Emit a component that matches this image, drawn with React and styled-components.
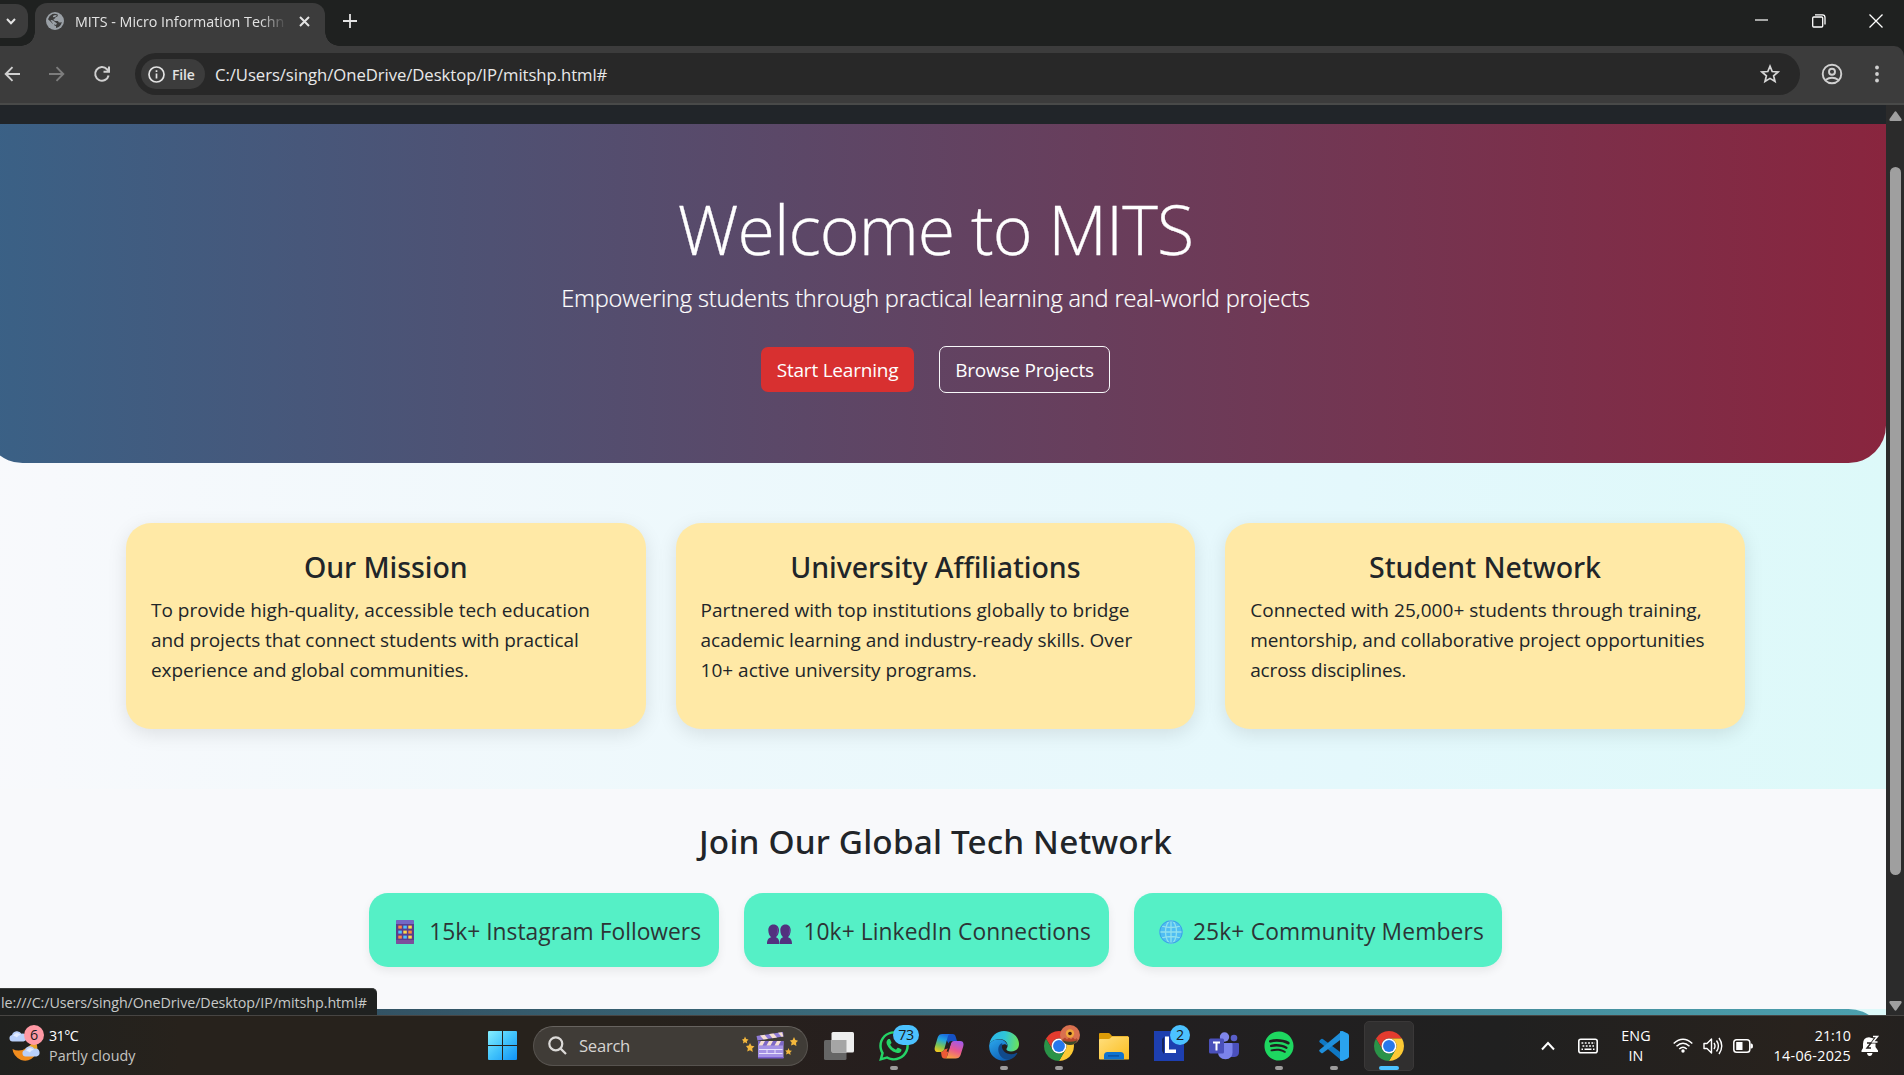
import React from "react";
import styled, { createGlobalStyle } from "styled-components";
import { FaSpotify, FaWhatsapp } from "react-icons/fa";

const Global = createGlobalStyle`
  *, *::before, *::after { box-sizing: border-box; }
  html, body { margin: 0; padding: 0; background: #1f2120; overflow: hidden; }
  body { font-family: "Open Sans", "Noto Sans", sans-serif; color: #212529; }
  h1, h2, h3, p { margin: 0; }
  svg { display: block; flex: none; }
`;

const Desktop = styled.div`
  width: 1904px;
  height: 1075px;
  overflow: hidden;
  display: flex;
  flex-direction: column;
`;

const Label = styled.span`
  display: block;
  white-space: nowrap;
  letter-spacing: ${(p) => p.$track || 0}px;
`;

/* ---------- Browser chrome ---------- */

const TabStrip = styled.header`
  height: 46px;
  flex: none;
  display: flex;
  background: #1f2120;
`;
const TabSearch = styled.div`
  width: 28px;
  height: 34px;
  margin-top: 4px;
  border-radius: 0 12px 12px 0;
  background: #3c3c3c;
  display: flex;
  align-items: center;
  padding-left: 5px;
`;
const Tab = styled.div`
  position: relative;
  width: 290px;
  height: 43px;
  margin: 3px 0 0 7px;
  padding: 0 12px 7px 11px;
  border-radius: 12px 12px 0 0;
  background: #3c3c3c;
  display: flex;
  align-items: center;
  &::before, &::after {
    content: "";
    position: absolute;
    bottom: 0;
    width: 14px;
    height: 14px;
  }
  &::before { left: -14px; background: radial-gradient(circle at 0 0, transparent 13.5px, #3c3c3c 14px); }
  &::after { right: -14px; background: radial-gradient(circle at 100% 0, transparent 13.5px, #3c3c3c 14px); }
`;
const TabTitle = styled.div`
  width: 209px;
  margin-left: 11px;
  padding-top: 1px;
  overflow: hidden;
  font-size: 14.3px;
  line-height: 22px;
  color: #e3e3e3;
  mask-image: linear-gradient(to right, #000 185px, transparent 212px);
`;
const TabClose = styled.div`
  margin-left: auto;
  margin-right: 3px;
`;
const NewTab = styled.div`
  margin: 14px 0 0 18px;
`;
const WindowControls = styled.div`
  margin-left: auto;
  display: flex;
  align-items: center;
  gap: 43px;
  padding: 0 21px 5px 0;
`;
const Toolbar = styled.div`
  height: 59px;
  flex: none;
  display: flex;
  align-items: center;
  padding-bottom: 1px;
  background: #3c3c3c;
  border-bottom: 2px solid #494a49;
  border-top-right-radius: 10px;
`;
const NavButtons = styled.div`
  width: 135px;
  display: flex;
  align-items: center;
  gap: 27px;
  padding-left: 3px;
`;
const AddressBar = styled.div`
  width: 1665px;
  height: 42px;
  border-radius: 21px;
  background: #282828;
  display: flex;
  align-items: center;
  padding: 0 20px 0 6px;
`;
const FileChip = styled.div`
  width: 64px;
  height: 30px;
  border-radius: 15px;
  background: #3c3c3c;
  display: flex;
  align-items: center;
  gap: 7px;
  padding-left: 7px;
  font: 600 14px "Open Sans", sans-serif;
  color: #e3e3e3;
`;
const Url = styled.div`
  margin-left: 10px;
  padding-top: 1px;
  font-size: 16.7px;
  line-height: 26px;
  color: #e8e8e8;
`;
const BarEnd = styled.div`
  margin-left: auto;
`;
const ToolbarActions = styled.div`
  display: flex;
  align-items: center;
  gap: 29px;
  margin-left: 21px;
`;

/* ---------- Page ---------- */

const Viewport = styled.main`
  height: 910px;
  flex: none;
  display: flex;
  position: relative;
`;
const Page = styled.div`
  width: 1901px;
  height: 910px;
  margin-left: -15px;
  flex: none;
  overflow: hidden;
  background: linear-gradient(to right, #f8f9fc 0%, #e4f8fc 72%, #ddf9f9 100%);
`;
const NavBarEdge = styled.div`
  height: 19px;
  background: #212529;
`;
const Hero = styled.section`
  height: 339px;
  padding-top: 62.5px;
  border-radius: 0 0 37.5px 37.5px;
  background: linear-gradient(to right, #3a6186, #89253e);
  color: #fff;
  display: flex;
  flex-direction: column;
  align-items: center;
`;
const HeroTitle = styled.h1`
  font-size: 68px;
  font-weight: 300;
  line-height: 84px;
  letter-spacing: -0.95px;
  white-space: nowrap;
  -webkit-text-stroke: 0.3px #fff;
`;
const HeroLead = styled.p`
  margin-top: 9px;
  font-size: 23.6px;
  font-weight: 300;
  line-height: 37.5px;
  letter-spacing: -0.17px;
  white-space: nowrap;
  -webkit-text-stroke: 0.2px #fff;
`;
const HeroActions = styled.div`
  margin-top: 28.5px;
  display: flex;
  align-items: center;
  gap: 25px;
`;
const Button = styled.button`
  width: ${(p) => p.$width}px;
  height: ${(p) => (p.$outline ? "47px" : "45px")};
  padding: 2px 0 0;
  border: ${(p) => (p.$outline ? "1.25px solid #f8f9fa" : "0")};
  border-radius: 7px;
  background: ${(p) => (p.$outline ? "transparent" : "#d83030")};
  color: #fff;
  font: 400 19px/30px "Open Sans", sans-serif;
  letter-spacing: -0.22px;
`;
const Features = styled.section`
  height: 326px;
  padding: 60px 0 0 141px;
  display: grid;
  grid-template-columns: repeat(3, 519.6px);
  grid-template-rows: 206px;
  column-gap: 30px;
`;
const Card = styled.article`
  border-radius: 25px;
  padding: 26px 25px 25px;
  background: #ffe9a6;
  box-shadow: 0 5px 19px rgba(0, 0, 0, 0.1);
`;
const CardTitle = styled.h3`
  margin-bottom: 10px;
  font: 500 28.5px/36px "Noto Sans", sans-serif;
  letter-spacing: -0.04px;
  text-align: center;
`;
const CardText = styled.p`
  font-size: 19px;
  line-height: 30px;
`;
const Community = styled.section`
  height: 220px;
  padding-top: 31px;
  background: #f8f9fb;
  display: flex;
  flex-direction: column;
  align-items: center;
`;
const CommunityTitle = styled.h2`
  font: 500 33.3px/42px "Noto Sans", sans-serif;
  letter-spacing: 0.17px;
`;
const Pills = styled.div`
  margin-top: 31px;
  display: flex;
  gap: 25px;
`;
const Pill = styled.div`
  width: ${(p) => p.$width}px;
  height: 74px;
  border-radius: 19px;
  padding: 4px 18px 0 0;
  background: #55f0c6;
  box-shadow: 0 4px 10px rgba(0, 0, 0, 0.07);
  display: flex;
  align-items: center;
  justify-content: flex-end;
  gap: ${(p) => p.$gap}px;
  font-size: 22.8px;
  line-height: 36px;
  color: #2d3436;
`;
const FooterTop = styled.footer`
  height: 120px;
  border-radius: 37.5px 37.5px 0 0;
  background: linear-gradient(to right, #2c3e50, #4ca1af);
`;
const Scrollbar = styled.div`
  width: 18px;
  background: #2b2b2b;
  display: flex;
  flex-direction: column;
  align-items: center;
  padding: 6px 0 4px 1px;
`;
const Thumb = styled.div`
  width: 11px;
  height: 708px;
  margin: 46px 0 auto;
  border-radius: 6px;
  background: #9f9f9f;
`;
const StatusBubble = styled.div`
  position: absolute;
  left: 0;
  bottom: 0;
  width: 377px;
  height: 27px;
  padding: 1px 10px 0 0;
  border-top: 1px solid #3b3d3c;
  border-top-right-radius: 5px;
  background: #1f2120;
  display: flex;
  justify-content: flex-end;
  overflow: hidden;
  font-size: 14.3px;
  line-height: 25px;
  color: #c7c9c8;
`;

/* ---------- Taskbar ---------- */

const Taskbar = styled.footer`
  height: 60px;
  flex: none;
  display: flex;
  align-items: center;
  border-top: 1px solid #474543;
  background: linear-gradient(to right, #20211f 0, #27221c 180px, #27221c 640px, #261e1e 900px, #221f20 1150px, #202020 1500px, #28221d 1800px, #24211f 1904px);
  color: #fff;
`;
const Weather = styled.div`
  width: 483px;
  display: flex;
  align-items: center;
  gap: 5px;
  padding: 0 0 0 8px;
  font-size: 14.3px;
  line-height: 20px;
`;
const Muted = styled.div`
  color: #c5c4c2;
`;
const AppsRow = styled.div`
  display: flex;
  align-items: center;
`;
const StartSlot = styled.div`
  margin: 0 16px 0 5px;
`;
const TaskCell = styled.div`
  position: relative;
  width: 50px;
  height: 50px;
  margin-right: 5px;
  border-radius: 5px;
  border: 1px solid ${(p) => (p.$active ? "#3a3838" : "transparent")};
  background: ${(p) => (p.$active ? "#302f2f" : "transparent")};
  display: flex;
  align-items: center;
  justify-content: center;
`;
const Indicator = styled.i`
  position: absolute;
  bottom: 0;
  left: 50%;
  width: ${(p) => (p.$active ? 20 : 8)}px;
  height: 4px;
  border-radius: 2px;
  transform: translateX(-50%);
  background: ${(p) => (p.$active ? "#4cc2ff" : "#9d9b9b")};
`;
const Badge = styled.span`
  position: absolute;
  top: ${(p) => p.$top ?? 3}px;
  right: ${(p) => p.$right ?? 3}px;
  width: ${(p) => p.$width || 20}px;
  height: 20px;
  border-radius: 10px;
  background: ${(p) => p.$tone || "#4cc2ff"};
  color: #1a1a1a;
  font-size: 14.3px;
  line-height: 20px;
  letter-spacing: -0.4px;
  text-align: center;
`;
const SearchBox = styled.div`
  width: 275px;
  height: 40px;
  margin-right: 6px;
  border-radius: 20px;
  border: 1px solid #57534f;
  border-top-color: #67635f;
  background: #403c37;
  display: flex;
  align-items: center;
  padding: 0 9px 0 14px;
  font-size: 16.7px;
  line-height: 24px;
  color: #d6d4d2;
`;
const SearchLabel = styled.div`
  margin: 0 auto 0 12px;
  padding-top: 1px;
`;
const WeatherIcon = styled.div`
  position: relative;
  width: 36px;
  height: 38px;
`;
const Tray = styled.div`
  margin-left: auto;
  display: flex;
  align-items: center;
  padding-right: 24px;
  font-size: 14.3px;
  line-height: 20px;
`;
const KeyboardSlot = styled.div`
  margin-left: 23px;
`;
const Language = styled.div`
  width: 30px;
  margin: 0 22px 0 23px;
  padding-top: 1px;
  display: flex;
  flex-direction: column;
  align-items: center;
`;
const StatusIcons = styled.div`
  display: flex;
  align-items: center;
  gap: 10px;
`;
const Clock = styled.div`
  width: 98px;
  margin-right: 10px;
  display: flex;
  flex-direction: column;
  align-items: flex-end;
`;

/* ---------- Icons ---------- */

const Stroke = ({ w, h = w, c = "#e3e3e3", s = 2, children }) => (
  <svg width={w} height={h} viewBox={`0 0 ${w} ${h}`} fill="none" stroke={c} strokeWidth={s}>
    {children}
  </svg>
);

const SpotifyMark = styled(FaSpotify)`
  color: #1ed760;
`;

const chromeSector = "M24 13H43.05A22 22 0 0 0 4.95 13L14.47 29.5A11 11 0 0 1 24 13Z";
const Chrome = () => (
  <svg width="30" height="30" viewBox="2 2 44 44">
    <path fill="#e33b2e" d={chromeSector} />
    <path fill="#fcc934" transform="rotate(120 24 24)" d={chromeSector} />
    <path fill="#2a9348" transform="rotate(240 24 24)" d={chromeSector} />
    <circle cx="24" cy="24" r="11" fill="#fff" />
    <circle cx="24" cy="24" r="8.7" fill="#2778ec" />
  </svg>
);

const Edge = () => (
  <svg width="30" height="30" viewBox="0 0 30 30">
    <defs>
      <linearGradient id="eTop" x1="0" y1=".4" x2="1" y2=".5">
        <stop offset="0" stopColor="#2bb5ea" />
        <stop offset=".5" stopColor="#2fc5d8" />
        <stop offset="1" stopColor="#6be25b" />
      </linearGradient>
      <linearGradient id="eLeft" x1="0" y1="0" x2=".6" y2="1">
        <stop offset="0" stopColor="#2ba8ec" />
        <stop offset="1" stopColor="#0f62b8" />
      </linearGradient>
    </defs>
    <path fill="url(#eTop)" d="M.4 13C1.6 5.2 8 0 15 0 24 0 30 6.5 30 13c0 5-3.5 7.500-8 7.500-3.500 0-5.500-1.500-4.200-3.200C20 14 17.500 9 12 8.300 6 7.500 2 10 .4 13Z" />
    <path fill="url(#eLeft)" d="M.2 14C1.500 9.500 6.500 7.800 11.500 8.600c4 .6 6.800 3.600 6.800 6.400-1.300-2.700-5.300-2.500-6.300 1C10.500 22 15 27.500 21 28.600 10.500 32.500-.8 25.500.2 14Z" />
    <path fill="#114a8b" d="M12.400 12.200C8 15 8.500 22 12.500 26c2.500 2.400 5.500 3.200 8.500 2.600 3-.9 5.500-3 7.200-6 .3-.7-.2-1-.8-.7-4.400 2.100-9.200 1.500-12.200-1.500-2.500-2.500-2.900-5.600-1.500-7.500Z" />
  </svg>
);

const Copilot = () => (
  <svg width="30" height="30" viewBox="0 0 30 30">
    <defs>
      <linearGradient id="cpA" x1=".5" y1="0" x2=".2" y2="1">
        <stop offset="0" stopColor="#1b6fe0" />
        <stop offset=".3" stopColor="#22a6de" />
        <stop offset=".65" stopColor="#7ac455" />
        <stop offset="1" stopColor="#f6c81e" />
      </linearGradient>
      <linearGradient id="cpB" x1=".7" y1="0" x2=".3" y2="1">
        <stop offset="0" stopColor="#a559e8" />
        <stop offset=".5" stopColor="#e9588f" />
        <stop offset="1" stopColor="#fda33d" />
      </linearGradient>
    </defs>
    <path fill="#1551c4" d="M9 3h9.500c2 0 2.700 1 3.200 2.700L23 10h-5c-2 0-3 .8-3.500 2.500Z" />
    <path fill="url(#cpA)" d="M8.500 3H17c-2 0-2.800 1.300-3.300 3l-3.500 12.500C9.700 20 8.600 21 7 21H4c-3 0-4-2-3-5.500l2.700-9C4.500 4 6 3 8.500 3Z" />
    <path fill="#ee5a35" d="M7 21c1.600 0 2.700-1 3.200-2.500l5-1.500-2 8c-.4 1.600-1.300 2.500-3 2.500-1.500 0-2.200-1-2.600-2.500Z" />
    <path fill="url(#cpB)" d="M21.500 27.500H10c2 0 2.900-1.200 3.400-3l3.500-12c.5-1.600 1.500-2.500 3.100-2.500h6c3 0 4.200 2 3.200 5.500l-2.600 8.500c-.8 2.500-2.500 3.500-5.100 3.500Z" />
    <path fill="#231f1f" d="M15.800 11.500 17.500 11 14.300 20.500 12.600 20.800Z" />
  </svg>
);

const Clapper = () => (
  <svg width="56" height="28" viewBox="0 0 56 28">
    <g fill="#f3b73c">
      <path d="M3 4.500 4.200 7 6.500 7.500 4.800 9.200 5.200 11.500 3 10.300 1 11.500 1.400 9.200 0 7.500 2 7Z" />
      <path d="M8 11 9.400 13.800 12.500 14.300 10.200 16.500 10.800 20 8 18.300 5.200 19.500 5.900 16.500 4 14 6.800 13.600Z" />
      <path d="M52 5 53.400 8 56 8.700 54 10.800 54.400 14 51.700 12.400 49 13.500 49.700 10.600 47.800 8.500 50.600 8Z" />
      <path d="M46.500 16 47.600 18.400 50 18.700 48.200 20.500 48.600 23 46.400 21.600 44 22.600 44.700 20.200 43.200 18.400 45.600 18.200Z" />
    </g>
    <path fill="#8f7bd6" d="M14.500 4 41 0 41.500 4.500 15.500 8.500Z" />
    <path fill="#f6dfd2" d="M18 3.500 22.500 2.800 26 6.900 21.500 7.600ZM27 2.100 31.500 1.400 35 5.500 30.500 6.200ZM36 .8 40 .2 41.400 4.500 39.500 4.800Z" />
    <path fill="#a492e4" d="M16 9H41.500V26H16Z" />
    <path fill="#7d68c6" d="M16 9H41.500V13.500H16Z" />
    <path fill="#f6dfd2" d="M19 9H23L20.500 13.500H16.500ZM27 9H31L28.500 13.500H24.500ZM35 9H39L36.500 13.500H32.500Z" />
    <path stroke="#e8e2fb" d="M17 17.500H40.500M17 21.500H40.500M25 17.500V21.500M33 17.500V21.500" />
    <path fill="#7a5fd0" d="M16 25H41.500V26.500H16Z" />
  </svg>
);

const Teams = () => (
  <svg width="30" height="28" viewBox="0 0 30 28">
    <circle cx="25" cy="6" r="3.3" fill="#5a5fc9" />
    <path fill="#4b50bc" d="M21 11h8q1 0 1 1v8q0 4.500-4.500 5H21Z" />
    <circle cx="15.5" cy="5" r="4.7" fill="#7f86ea" />
    <path fill="#7b83eb" d="M9 11h13.500q1 0 1 1v8.500q0 6.500-7 6.800-7.500-.3-7.500-7Z" />
    <rect y="6.5" width="15" height="15" rx="1.5" fill="#4a50bb" />
    <path fill="none" stroke="#fff" strokeWidth="2" d="M4 10.500H11M7.500 10.500V18.500" />
  </svg>
);

const VsCode = () => (
  <svg width="30" height="30" viewBox="0 0 30 30">
    <path fill="#0f78c4" d="M.6 9.400 2.200 8q.8-.5 1.600 0L22.500 22v7.600L.7 11.200Q-.2 10.300.6 9.400Z" />
    <path fill="#1f8fdb" d="M.6 20.600 2.200 22q.8.500 1.600 0L22.500 8V.4L.7 18.800Q-.2 19.700.6 20.600Z" />
    <path fill="#2aa3ef" d="M21 29.700V.3L23.500 0 28.700 2.500Q30 3.200 30 4.700V25.300Q30 26.800 28.700 27.500L23.500 30Z" />
  </svg>
);

const Folder = () => (
  <svg width="30" height="28" viewBox="0 0 30 28">
    <defs>
      <linearGradient id="fold" x1="0" y1="0" x2="1" y2="1">
        <stop offset="0" stopColor="#ffdf7e" />
        <stop offset="1" stopColor="#fbbd1e" />
      </linearGradient>
    </defs>
    <path fill="#dc9c08" d="M0 2Q0 1 1 1H9.500Q10.500 1 11.200 2L13 4H29V12H0Z" />
    <path fill="url(#fold)" d="M0 8Q0 7 1 7H9.500Q10.500 7 11.500 6L13 4.500H29Q30 4.500 30 5.500V27Q30 27.500 29 27.500H1Q0 27.500 0 26.500Z" />
    <path fill="#0f73cf" d="M5 27.500V23.500Q5 20 8.500 20H21.500Q25 20 25 23.500V27.500Z" />
    <path fill="#0b4f9d" d="M9 23.200H20V24.600H9Z" />
  </svg>
);

const windowTones = ["#ff8a3d", "#4cc2ff", "#ffd84a", "#4cc2ff", "#ffd84a", "#ff8a3d", "#ff8a3d", "#4cc2ff", "#ffd84a"];
const Phone = () => (
  <svg width="18" height="24" viewBox="0 0 18 24">
    <rect width="18" height="24" rx="1.5" fill="#5b3d8c" />
    <path fill="#7468c4" d="M0 1.500Q0 0 1.500 0H16.500Q18 0 18 1.500V4H0Z" />
    <path fill="#7d4f9c" d="M0 20H18V22.500Q18 24 16.500 24H1.500Q0 24 0 22.500Z" />
    {windowTones.map((c, i) => (
      <rect key={i} x={2.3 + (i % 3) * 5} y={5.6 + Math.floor(i / 3) * 5} width="3.5" height="3" fill={c} />
    ))}
  </svg>
);

const People = () => (
  <svg width="25" height="24" viewBox="0 -4.5 25 24">
    <g fill="#52317f">
      <path d="M1.300 5.500C1.500 1.500 4 0 6.500 0S11.800 1.500 12 5.500C12 9 10.200 12 8.800 12.700 11 13.500 12.500 15 12.500 19.500H0C0 15 1.500 13.500 4.300 12.700 2.800 12 1.300 9 1.300 5.500Z" />
      <path d="M13.300 5.500C13.500 1.500 16 0 18.500 0S23.500 1.500 23.700 5.500C23.700 9 22.200 12 20.800 12.700 23.500 13.500 25 15 25 19.500H12.800C12.800 15 13.700 13.500 16.300 12.700 14.800 12 13.300 9 13.300 5.500Z" />
    </g>
    <path fill="#6a45a0" d="M9.500 2Q12 5 10.500 9L9 11Q11 6 9.500 2ZM21.500 2Q24 5 22.500 9L21 11Q23 6 21.500 2Z" />
  </svg>
);

const GlobeEmoji = () => (
  <svg width="24" height="24" viewBox="0 0 24 24">
    <circle cx="12" cy="12" r="11.7" fill="#4fbdf3" />
    <g fill="none" stroke="#8fe0ee" strokeWidth="1.3">
      <ellipse cx="12" cy="12" rx="5.5" ry="11.3" />
      <path d="M12 .5V23.500M.5 12H23.500M2.500 6Q12 9 21.500 6M2.500 18Q12 15 21.500 18" />
    </g>
    <circle cx="12" cy="12" r="11.2" fill="none" stroke="#3ba6e2" />
  </svg>
);

const Cloud = ({ x, y }) => (
  <g transform={`translate(${x} ${y})`}>
    <path fill="#b9d0fa" d="M3.500 11A3.300 3.300 0 0 1 3 4.500 5.200 5.200 0 0 1 12.500 3.200 4 4 0 0 1 14.500 11Z" />
    <path fill="#e2ecff" d="M4 5.500Q7 0 12 4.500 9 4 8 7 6 5 4 5.500Z" />
  </g>
);

/* ---------- Content ---------- */

const cards = [
  {
    title: "Our Mission",
    lines: [
      ["To provide high-quality, accessible tech education", 0],
      ["and projects that connect students with practical", -0.07],
      ["experience and global communities.", -0.06],
    ],
  },
  {
    title: "University Affiliations",
    lines: [
      ["Partnered with top institutions globally to bridge", 0.01],
      ["academic learning and industry-ready skills. Over", -0.05],
      ["10+ active university programs.", 0],
    ],
  },
  {
    title: "Student Network",
    lines: [
      ["Connected with 25,000+ students through training,", 0.03],
      ["mentorship, and collaborative project opportunities", -0.06],
      ["across disciplines.", -0.15],
    ],
  },
];

const pills = [
  { icon: <Phone />, text: "15k+ Instagram Followers", width: 350, gap: 15, track: 0 },
  { icon: <People />, text: "10k+ LinkedIn Connections", width: 365, gap: 11, track: 0.07 },
  { icon: <GlobeEmoji />, text: "25k+ Community Members", width: 368, gap: 10, track: 0.15 },
];

function BrowserTabs() {
  return (
    <TabStrip>
      <TabSearch>
        <Stroke w={12} h={12} s={2}><path d="M2 4 6 8.200 10 4" /></Stroke>
      </TabSearch>
      <Tab>
        <svg width="18" height="18" viewBox="0 0 18 18">
          <circle cx="9" cy="9" r="9" fill="#9aa0a6" />
          <path fill="#3c3c3c" d="M6.500 2Q9.500 1.500 12 2.700 12 5 9.500 5.200 9.500 7 7.500 7 7.500 9 9.500 9H12Q12.500 11 14.500 10.500L15.800 10Q15 15 10 16V14Q8 14 8 12 6 12 5 10L2 7.200Q3 3.500 6.500 2Z" />
          <path fill="#9aa0a6" d="M7 4Q9 2.500 11 3.500L9 5 7 5.200ZM4.500 8Q7 7.500 9 10L11 11.500 10 13 7 12Z" />
        </svg>
        <TabTitle><Label>MITS - Micro Information Techn</Label></TabTitle>
        <TabClose><Stroke w={11} h={11}><path d="M1 1 10 10M10 1 1 10" /></Stroke></TabClose>
      </Tab>
      <NewTab><Stroke w={14} h={14} s={1.8}><path d="M7 0V14M0 7H14" /></Stroke></NewTab>
      <WindowControls>
        <Stroke w={14} h={14} s={1.2} c="#fff"><path d="M0 6H13" /></Stroke>
        <Stroke w={14} h={14} s={1.3} c="#fff">
          <rect x=".7" y="3" width="10" height="10" rx="1" />
          <path d="M3 .8H10.500Q13 .8 13 3.500V10.500" />
        </Stroke>
        <Stroke w={14} h={14} s={1.3} c="#fff"><path d="M.5 .5 13.500 13.500M13.500 .5 .5 13.500" /></Stroke>
      </WindowControls>
    </TabStrip>
  );
}

function BrowserToolbar() {
  return (
    <Toolbar>
      <NavButtons>
        <Stroke w={18} h={18} s={1.9} c="#d0d0d0"><path d="M17 9H3M9.500 2.200 2.700 9 9.500 15.800" /></Stroke>
        <Stroke w={18} h={18} s={1.9} c="#7d7d7d"><path d="M1 9H15M8.500 2.200 15.300 9 8.500 15.800" /></Stroke>
        <Stroke w={18} h={18} s={2} c="#d0d0d0">
          <path d="M15.600 10.500A6.800 6.800 0 1 1 14 4.300L15.500 6M16 1.500V6.700H10.500" />
        </Stroke>
      </NavButtons>
      <AddressBar>
        <FileChip>
          <Stroke w={17} h={17} s={1.7}>
            <circle cx="8.500" cy="8.500" r="7.500" />
            <path d="M8.500 7.500V12.500M8.500 4.300V6" />
          </Stroke>
          <Label $track={-0.15}>File</Label>
        </FileChip>
        <Url><Label $track={-0.06}>C:/Users/singh/OneDrive/Desktop/IP/mitshp.html#</Label></Url>
        <BarEnd>
          <Stroke w={20} h={20} s={1.7} c="#d6d6d6">
            <path d="M10 2.200 12.200 7.500 18 8 13.600 11.800 15 17.500 10 14.400 5 17.500 6.400 11.800 2 8 7.800 7.500Z" />
          </Stroke>
        </BarEnd>
      </AddressBar>
      <ToolbarActions>
        <Stroke w={22} h={22} s={1.9} c="#d0d0d0">
          <circle cx="11" cy="11" r="9.300" />
          <circle cx="11" cy="8.800" r="3" />
          <path d="M4.500 17Q11 12.500 17.500 17" />
        </Stroke>
        <svg width="10" height="20" viewBox="0 0 10 20" fill="#d0d0d0">
          <circle cx="5" cy="3.5" r="1.9" />
          <circle cx="5" cy="10" r="1.9" />
          <circle cx="5" cy="16.5" r="1.9" />
        </svg>
      </ToolbarActions>
    </Toolbar>
  );
}

function WebPage() {
  return (
    <Page>
      <NavBarEdge />
      <Hero>
        <HeroTitle>Welcome to MITS</HeroTitle>
        <HeroLead>Empowering students through practical learning and real-world projects</HeroLead>
        <HeroActions>
          <Button $width={153}>Start Learning</Button>
          <Button $width={171} $outline>Browse Projects</Button>
        </HeroActions>
      </Hero>
      <Features>
        {cards.map((card) => (
          <Card key={card.title}>
            <CardTitle>{card.title}</CardTitle>
            <CardText>
              {card.lines.map(([text, track]) => (
                <Label key={text} $track={track}>{text}</Label>
              ))}
            </CardText>
          </Card>
        ))}
      </Features>
      <Community>
        <CommunityTitle>Join Our Global Tech Network</CommunityTitle>
        <Pills>
          {pills.map((pill) => (
            <Pill key={pill.text} $width={pill.width} $gap={pill.gap}>
              {pill.icon}
              <Label $track={pill.track}>{pill.text}</Label>
            </Pill>
          ))}
        </Pills>
      </Community>
      <FooterTop />
    </Page>
  );
}

function TaskbarApps() {
  return (
    <AppsRow>
      <StartSlot>
        <svg width="29" height="29" viewBox="0 0 29 29">
          <defs>
            <linearGradient id="win" x1="0" y1="0" x2="29" y2="29" gradientUnits="userSpaceOnUse">
              <stop offset="0" stopColor="#86efff" />
              <stop offset=".5" stopColor="#41c3fb" />
              <stop offset="1" stopColor="#1092f7" />
            </linearGradient>
          </defs>
          <path fill="url(#win)" d="M1 0H14V14H0V1Q0 0 1 0ZM15 0H28Q29 0 29 1V14H15ZM0 15H14V29H1Q0 29 0 28ZM15 15H29V28Q29 29 28 29H15Z" />
        </svg>
      </StartSlot>
      <SearchBox>
        <Stroke w={19} h={19} s={2.2} c="#dcdad8">
          <circle cx="7.800" cy="7.800" r="6.500" />
          <path d="M12.600 12.600 18 18" />
        </Stroke>
        <SearchLabel><Label $track={-0.3}>Search</Label></SearchLabel>
        <Clapper />
      </SearchBox>
      <TaskCell>
        <svg width="30" height="28" viewBox="0 0 30 28">
          <rect y="8" width="22.5" height="20" rx="1.5" fill="#666" />
          <rect x="7.5" width="22.5" height="20.5" rx="1.5" fill="#eee" />
          <path fill="#a5a5a5" d="M7.500 8H22.500V20.500H9Q7.500 20.500 7.500 19Z" />
        </svg>
      </TaskCell>
      <TaskCell>
        <FaWhatsapp size={34} color="#25d366" />
        <Badge $width={26} $right={-1}>73</Badge>
        <Indicator />
      </TaskCell>
      <TaskCell><Copilot /></TaskCell>
      <TaskCell><Edge /><Indicator /></TaskCell>
      <TaskCell>
        <Chrome />
        <Badge $tone="#d9704f">
          <svg width="20" height="20" viewBox="0 0 20 20">
            <path fill="#3b4a2a" d="M2 14.500Q10 17 18 14.500 15 20 10 20T2 14.500Z" />
            <path fill="#b5452c" d="M3 14 5 12.500 7 14.500 9 12.500 11 14.500 13 12.500 15 14.500 17 13V15.500Q10 18 3 15.500Z" />
            <circle cx="10" cy="8.5" r="4.2" fill="#f0a53a" />
            <circle cx="10" cy="8.5" r="1.8" fill="#3a1a10" />
          </svg>
        </Badge>
        <Indicator />
      </TaskCell>
      <TaskCell><Folder /></TaskCell>
      <TaskCell>
        <svg width="30" height="30" viewBox="0 0 30 30">
          <rect width="30" height="30" fill="#1d3fb0" />
          <path fill="#16245a" d="M10 6V23L8 20V8Z" />
          <path fill="#fff" d="M11 5.500H15V18.500H22V22H11Z" />
        </svg>
        <Badge $right={3}>2</Badge>
      </TaskCell>
      <TaskCell><Teams /></TaskCell>
      <TaskCell><SpotifyMark size={30} /><Indicator /></TaskCell>
      <TaskCell><VsCode /><Indicator /></TaskCell>
      <TaskCell $active><Chrome /><Indicator $active /></TaskCell>
    </AppsRow>
  );
}

function SystemTray() {
  return (
    <Tray>
      <Stroke w={14} h={10} s={2} c="#fff"><path d="M1 8.500 7 2 13 8.500" /></Stroke>
      <KeyboardSlot>
        <Stroke w={20} h={16} s={1.6} c="#fff">
          <rect x=".8" y="1.300" width="18.400" height="13.400" rx="2" />
          <path strokeDasharray="1.800 1.500" d="M3.500 5H17M4.500 8H16" />
          <path d="M3.500 11.300H5M6.500 11.300H13.500M15 11.300H16.500" />
        </Stroke>
      </KeyboardSlot>
      <Language>
        <Label $track={0.1}>ENG</Label>
        <Label>IN</Label>
      </Language>
      <StatusIcons>
        <Stroke w={20} h={16} s={1.5} c="#fff">
          <path d="M.7 5.500Q10-3 19.300 5.500M3.500 8.300Q10 2.300 16.500 8.300M6.200 11Q10 7.500 13.800 11" />
          <circle cx="10" cy="13" r="1.700" fill="#fff" stroke="none" />
        </Stroke>
        <Stroke w={20} h={18} s={1.4} c="#fff">
          <path strokeLinejoin="round" d="M1 6.500H4L8.500 2V16L4 11.500H1Z" />
          <path d="M11 6Q13 9 11 12M13.500 3.500Q17.300 9 13.500 14.500M16 1Q21.500 9 16 17" />
        </Stroke>
        <Stroke w={20} h={14} s={1.5} c="#fff">
          <rect x=".8" y=".8" width="16" height="12.400" rx="2.800" />
          <path fill="#fff" stroke="none" d="M3.200 3H9.500V11H3.200ZM17.500 4.500H18.500Q20 4.500 20 7T18.500 9.500H17.500Z" />
        </Stroke>
      </StatusIcons>
      <Clock>
        <Label $track={-0.05}>21:10</Label>
        <Label $track={0.28}>14-06-2025</Label>
      </Clock>
      <svg width="19" height="22" viewBox="0 0 19 22">
        <path fill="#fff" d="M2 9Q2 2.500 8 2.200L14.500 4V12L17 15.500V17H.5V15.500L2 13ZM6 18H11.500Q11 21 8.700 21T6 18Z" />
        <path fill="none" stroke="#262220" strokeWidth="1.4" d="M6 8H10L6 13H10" />
        <path fill="none" stroke="#262220" strokeWidth="3" d="M12 1.500H16L12 7H16" />
        <path fill="none" stroke="#fff" strokeWidth="1.5" d="M12 1.500H16.500L12 7H16.500" />
      </svg>
    </Tray>
  );
}

export default function App() {
  return (
    <Desktop>
      <Global />
      <BrowserTabs />
      <BrowserToolbar />
      <Viewport>
        <WebPage />
        <Scrollbar>
          <svg width="13" height="10" viewBox="0 0 13 10">
            <path fill="#9f9f9f" d="M5.300 1.200Q6.500-.5 7.700 1.200L12.500 8Q13 10 11.500 10H1.500Q0 10 .5 8Z" />
          </svg>
          <Thumb />
          <svg width="13" height="10" viewBox="0 0 13 10">
            <path fill="#9f9f9f" d="M5.300 8.800Q6.500 10.500 7.700 8.800L12.500 2Q13 0 11.500 0H1.500Q0 0 .5 2Z" />
          </svg>
        </Scrollbar>
        <StatusBubble>
          <Label $track={-0.068}>le:///C:/Users/singh/OneDrive/Desktop/IP/mitshp.html#</Label>
        </StatusBubble>
      </Viewport>
      <Taskbar>
        <Weather>
          <WeatherIcon>
            <svg width="36" height="38" viewBox="0 0 36 38">
              <path fill="#f08c1e" d="M4.500 22Q12 26 20 20L27 14Q31 19 28 27 22 36 13 33 5 29 4.500 22Z" />
              <path fill="#e9a52c" d="M18 22 26 15Q30 18 29 24L20 26Z" />
              <Cloud x={1} y={3.5} />
              <Cloud x={14} y={18.5} />
            </svg>
            <Badge $tone="#ff99a4" $top={-2} $right={0}>6</Badge>
          </WeatherIcon>
          <div>
            <Label $track={-0.6}>31°C</Label>
            <Muted><Label $track={0.06}>Partly cloudy</Label></Muted>
          </div>
        </Weather>
        <TaskbarApps />
        <SystemTray />
      </Taskbar>
    </Desktop>
  );
}
